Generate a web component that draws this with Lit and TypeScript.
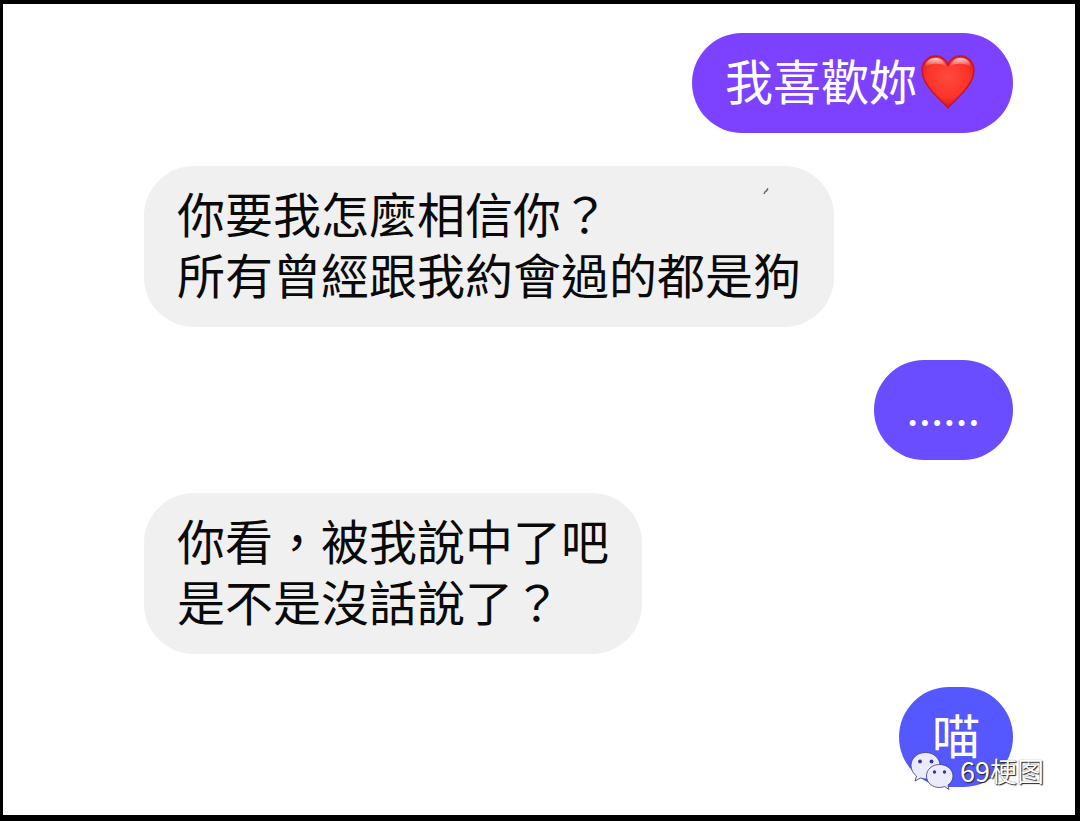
import { LitElement, html, css, svg } from "lit";
import { customElement, property } from "lit/decorators.js";

type Message = {
  from: "me" | "them";
  tone?: "violet" | "indigo" | "blue";
  lines: string[];
  heart?: boolean;
  dots?: boolean;
};

const MESSAGES: Message[] = [
  { from: "me", tone: "violet", lines: ["我喜歡妳"], heart: true },
  { from: "them", lines: ["你要我怎麼相信你？", "所有曾經跟我約會過的都是狗"] },
  { from: "me", tone: "indigo", lines: ["......"], dots: true },
  { from: "them", lines: ["你看，被我說中了吧", "是不是沒話說了？"] },
  { from: "me", tone: "blue", lines: ["喵"] },
];

const heart = svg`
  <svg class="heart" viewBox="0 0 54 54" role="img" aria-label="❤️">
    <defs>
      <radialGradient id="fill" cx="0.5" cy="0.4" r="0.62">
        <stop offset="0" stop-color="#ff4a3c" />
        <stop offset="0.65" stop-color="#fb3329" />
        <stop offset="1" stop-color="#c9151d" />
      </radialGradient>
      <linearGradient id="shine" x1="0" y1="0" x2="0" y2="1">
        <stop offset="0" stop-color="#fff" stop-opacity="0.8" />
        <stop offset="1" stop-color="#fff" stop-opacity="0" />
      </linearGradient>
    </defs>
    <path d="M27 53C25.500 50.500 20 46 13 38.500C5 30 1 23 1 15.500C1 7 7 1 14.500 1C20.500 1 25 4.500 27 10.500C29 4.500 33.500 1 39.500 1C47 1 53 7 53 15.500C53 23 49 30 41 38.500C34 46 28.500 50.500 27 53Z"
      fill="url(#fill)" stroke="#c4161f" stroke-width="1.400" stroke-linejoin="round" />
    <path d="M4 12C5 6 9 3 14.500 3C19 3 23 5.500 24.500 11C19 8 10 8 4 12Z" fill="url(#shine)" />
    <path d="M50 12C49 6 45 3 39.500 3C35 3 31 5.500 29.500 11C35 8 44 8 50 12Z" fill="url(#shine)" />
  </svg>`;

@customElement("chat-bubble")
export class ChatBubble extends LitElement {
  @property({ attribute: false }) message!: Message;

  static styles = css`
    :host {
      display: flex;
    }
    .bubble {
      margin: 0;
      padding: 16px 33px 23px;
      border-radius: 50px;
      font-size: 48px;
      line-height: 61px;
      white-space: nowrap;
    }
    .them {
      background: #f0f0f0;
      color: #0a0a0a;
    }
    .me {
      margin-left: auto;
      color: #fff;
    }
    .violet {
      background: #7d42ff;
    }
    .indigo {
      background: #694dfe;
    }
    .blue {
      background: #5558ff;
    }
    .line {
      display: flex;
      align-items: center;
      height: 61px;
    }
    .dots {
      font-size: 44px;
    }
    .heart {
      width: 54px;
      height: 54px;
      margin: 5px 5px 0 4px;
    }
  `;

  render() {
    const m = this.message;
    return html`<p class="bubble ${m.from} ${m.tone ?? ""} ${m.dots ? "dots" : ""}">
      ${m.lines.map((line) => html`<span class="line">${line}${m.heart ? heart : ""}</span>`)}
    </p>`;
  }
}

@customElement("app-root")
export class AppRoot extends LitElement {
  static styles = css`
    :host {
      display: block;
      font-family: "Noto Sans CJK TC", "Noto Sans", sans-serif;
    }
    .screen {
      position: relative;
      box-sizing: border-box;
      min-height: 100vh;
      border: solid #000;
      border-width: 4px 5px 6px 3px;
      background: #fff;
    }
    .thread {
      display: flex;
      flex-direction: column;
      gap: 33px;
      padding: 29px 62px 28px 141px;
    }
    .speck {
      position: absolute;
      left: 760px;
      top: 184px;
      width: 6px;
      height: 7px;
    }
    .mark {
      position: absolute;
      right: 31px;
      bottom: 25px;
      display: flex;
      align-items: center;
      gap: 6px;
      color: #fff;
      font: 27px/36px "Noto Sans CJK SC", sans-serif;
      text-shadow: 1px 1px 1px #222, 0 0 1px #444;
    }
    .logo {
      width: 44px;
      height: 38px;
    }
  `;

  render() {
    return html`
      <main class="screen">
        <section class="thread">
          ${MESSAGES.map((m) => html`<chat-bubble .message=${m}></chat-bubble>`)}
        </section>
        <svg class="speck" viewBox="0 0 6 7" aria-hidden="true">
          <path d="M1 6L2.500 3M3 3.500L5 .5" stroke="#666" stroke-width="1.500" fill="none" />
        </svg>
        <div class="mark">
          <svg class="logo" viewBox="0 0 44 38" aria-hidden="true">
            <g fill="#ebeafe" stroke="#333a70" stroke-width="0.8" stroke-linejoin="round">
              <path d="M15.500 0.500C7.500 0.500 1 6 1 13.500C1 17.500 3 21.500 6.500 24L5 29L10.500 26C12 26.500 14 27 16 27C24 27 30 21 30 13.500C30 6 23.500 0.500 15.500 0.500Z" />
              <path d="M29.500 12.500C22 12.500 16.500 17.500 16.500 24C16.500 30.500 22 35.500 29.500 35.500C31.500 35.500 33 35.200 34.500 34.500L39 37.500L38 33C41 31 43 28 43 24C43 17.500 37 12.500 29.500 12.500Z" />
            </g>
            <g fill="#333a90">
              <circle cx="10" cy="9.500" r="1.900" />
              <circle cx="21.500" cy="9.500" r="1.900" />
              <circle cx="24.500" cy="20" r="1.700" />
              <circle cx="34.500" cy="20" r="1.700" />
            </g>
          </svg>
          <span>69梗图</span>
        </div>
      </main>
    `;
  }
}
